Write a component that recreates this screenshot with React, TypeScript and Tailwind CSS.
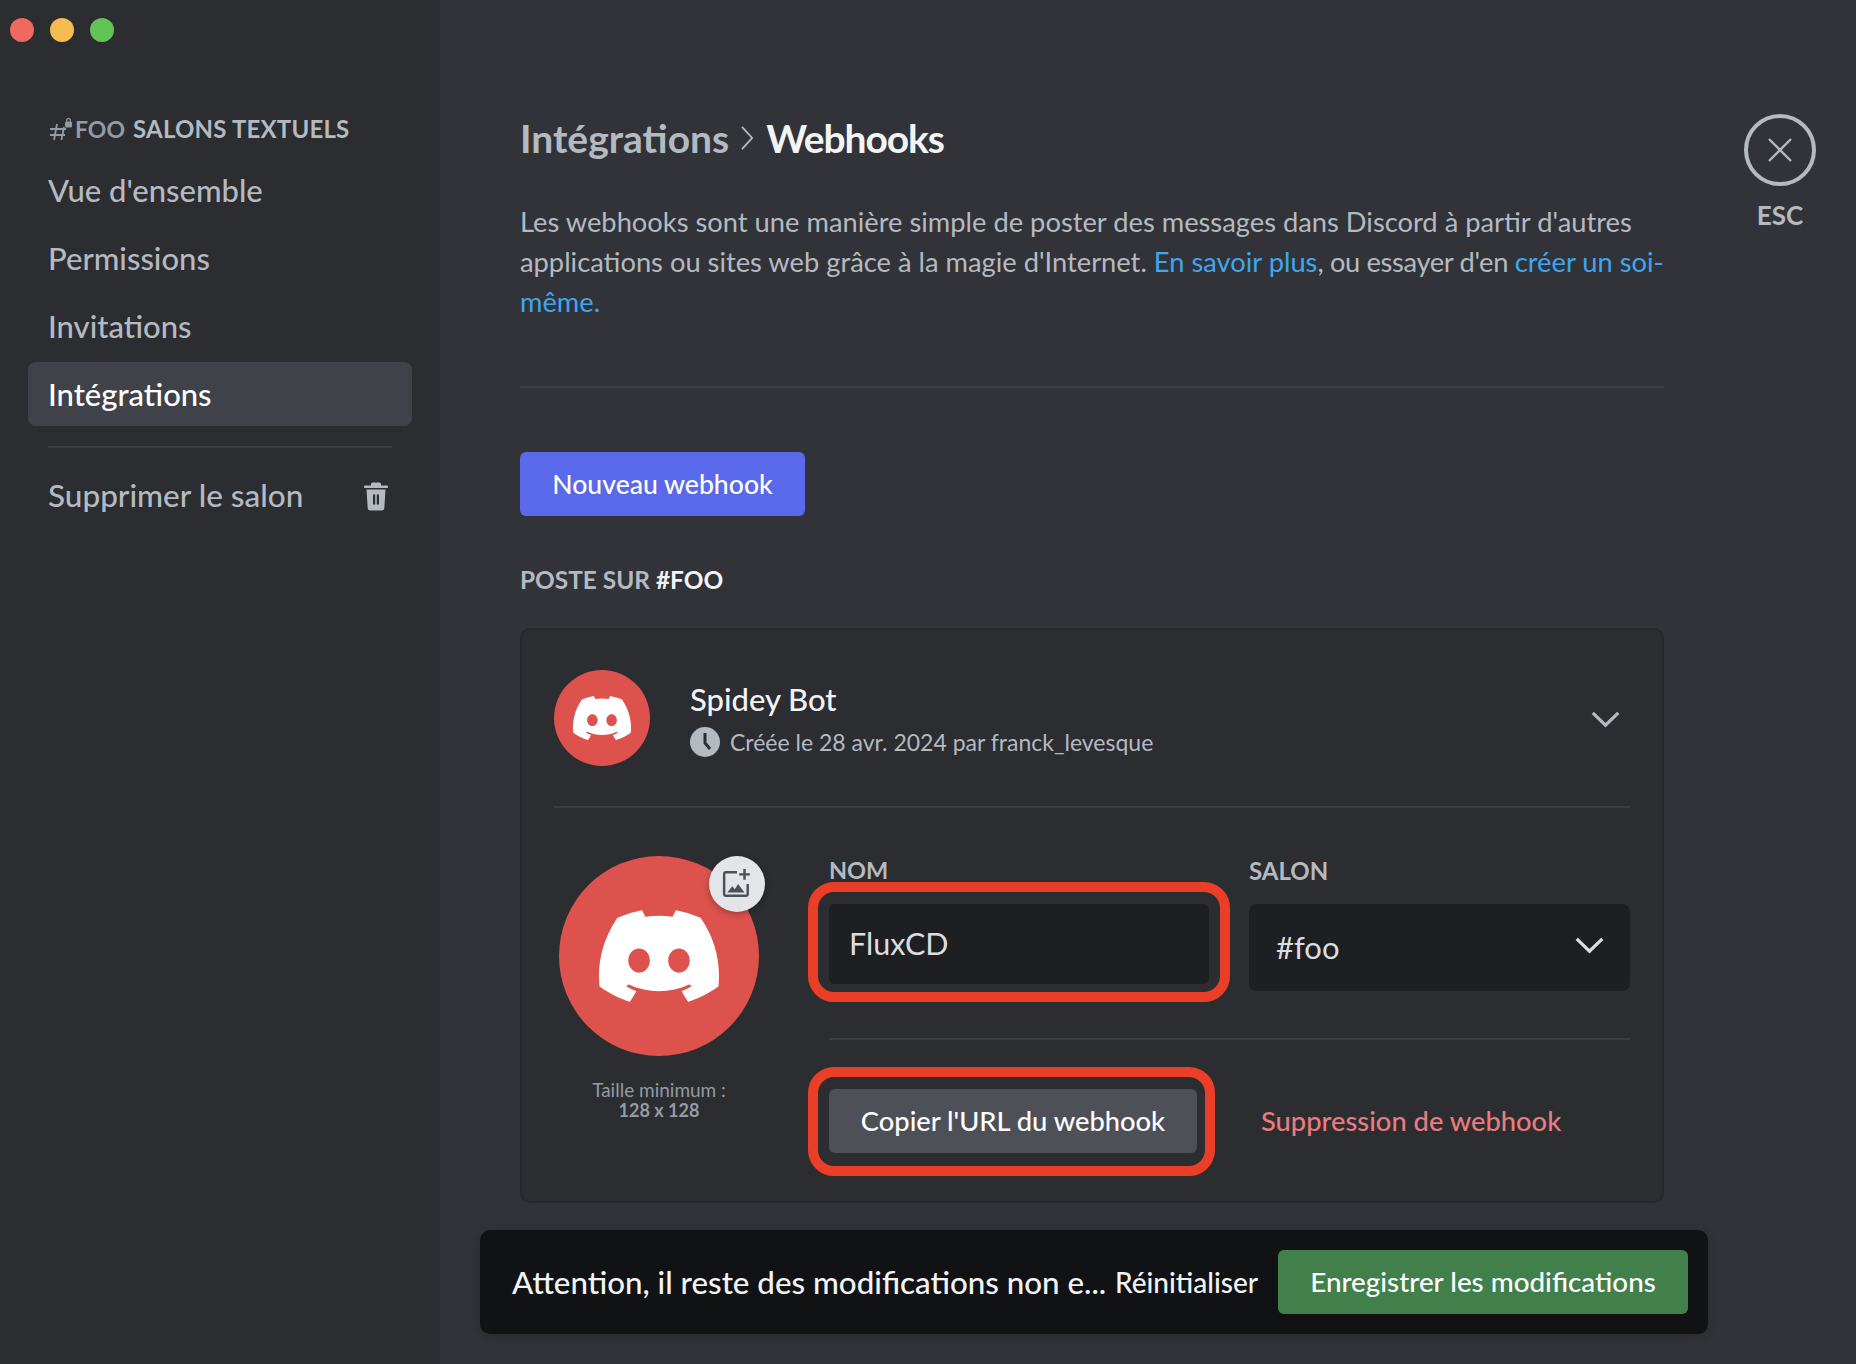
import { SiDiscord } from "react-icons/si";

function Chevron({ className }: { className: string }) {
  return (
    <svg viewBox="0 0 30 18" className={className} fill="none" stroke="currentColor" strokeWidth="3.4">
      <path d="M1.5 2 15 15 28.5 2" />
    </svg>
  );
}

function NavItem({ label, active }: { label: string; active?: boolean }) {
  return (
    <div
      className={
        active
          ? "flex h-[64px] w-[384px] items-center rounded-[8px] bg-[#404249] px-[20px] text-[31px] font-medium text-white"
          : "flex h-[64px] w-[384px] items-center rounded-[8px] px-[20px] text-[31px] font-medium text-[#b5bac1]"
      }
    >
      {label}
    </div>
  );
}

function Sidebar() {
  return (
    <aside className="h-full w-[440px] shrink-0 bg-[#2b2d31]">
      <div className="ml-[10px] flex gap-[16px] pt-[18px]">
        <div className="size-[24px] rounded-full bg-[#ee6a5f]" />
        <div className="size-[24px] rounded-full bg-[#f5bd4f]" />
        <div className="size-[24px] rounded-full bg-[#61c454]" />
      </div>
      <div className="ml-[49px] mt-[72px] flex h-[30px] items-center text-[24px] font-bold text-[#b5bac1]">
        <svg viewBox="0 0 24 24" className="mr-[2px] size-[24px] text-[#949ba4]" fill="none" stroke="currentColor" strokeWidth="1.8">
          <path d="M8 7 5 23M15 10l-2.6 13M1 12h16M1 18h15" />
          <rect x="16" y="4.5" width="7" height="6" rx="1.5" fill="currentColor" stroke="none" />
          <path d="M17.6 5V3.6a1.9 1.9 0 0 1 3.8 0V5" strokeWidth="1.2" />
        </svg>
        <span className="text-[23px] text-[#949ba4]">FOO</span>
        <span className="ml-[8px] tracking-[0.2px]">SALONS TEXTUELS</span>
      </div>
      <div className="ml-[28px] mt-[14px] flex flex-col gap-[4px]">
        <NavItem label="Vue d'ensemble" />
        <NavItem label="Permissions" />
        <NavItem label="Invitations" />
        <NavItem label="Intégrations" active />
      </div>
      <div className="ml-[48px] mt-[20px] h-[2px] w-[344px] bg-[#3b3d44]" />
      <div className="ml-[28px] mt-[16px] flex h-[64px] w-[384px] items-center justify-between pl-[20px] pr-[24px] text-[31.5px] font-medium text-[#b5bac1]">
        <span>Supprimer le salon</span>
        <svg viewBox="0 0 24 28" className="h-[29px] w-[24px]" fill="currentColor">
          <path d="M8.5 0h7a1.5 1.5 0 0 1 1.5 1.5V3h6a1 1 0 0 1 0 2.4H1A1 1 0 0 1 1 3h6V1.500A1.500 1.500 0 0 1 8.500 0Z" />
          <path fillRule="evenodd" d="M2.500 7h19l-1.200 18.500A2.700 2.700 0 0 1 17.600 28H6.400a2.700 2.700 0 0 1-2.700-2.500L2.500 7Zm6.500 5v10h2.200V12H9Zm3.800 0v10H15V12h-2.200Z" />
        </svg>
      </div>
    </aside>
  );
}

function WebhookCard() {
  return (
    <div className="mt-[34px] h-[575px] rounded-[10px] border-2 border-[#26282c] bg-[#2b2d31] px-[32px] pt-[40px]">
      <div className="flex h-[96px] items-center">
        <div className="flex size-[96px] items-center justify-center rounded-full bg-[#dd524c]">
          <SiDiscord className="size-[58px] text-white" />
        </div>
        <div className="ml-[40px] flex-1">
          <div className="text-[31px] font-medium leading-[40px] text-[#f2f3f5]">Spidey Bot</div>
          <div className="mt-[8px] flex h-[30px] items-center text-[23px] text-[#b5bac1]">
            <svg viewBox="0 0 30 30" className="mr-[10px] size-[30px]">
              <circle cx="15" cy="15" r="15" fill="#b5bac1" />
              <path d="M15 6v10l5 6" fill="none" stroke="#2b2d31" strokeWidth="3" />
            </svg>
            Créée le 28 avr. 2024 par franck_levesque
          </div>
        </div>
        <Chevron className="mr-[10px] mt-[2px] h-[17px] w-[29px] text-[#b5bac1]" />
      </div>

      <div className="mt-[40px] h-[2px] bg-[#3b3d44]" />

      <div className="flex pt-[48px]">
        <div className="w-[275px] shrink-0 pl-[5px]">
          <div className="relative size-[200px]">
            <div className="flex size-[200px] items-center justify-center rounded-full bg-[#dd524c]">
              <SiDiscord className="size-[120px] text-white" />
            </div>
            <div className="absolute right-[-6px] top-0 flex size-[56px] items-center justify-center rounded-full bg-[#e3e5e8] shadow-[0_2px_6px_rgba(0,0,0,0.3)]">
              <svg viewBox="0 0 28 28" className="size-[30px] text-[#4e5058]" fill="none" stroke="currentColor" strokeWidth="2.300">
                <path d="M14 3H3.500a1.500 1.500 0 0 0-1.500 1.500v19A1.500 1.500 0 0 0 3.500 25h19a1.500 1.500 0 0 0 1.500-1.500V14" />
                <path d="M21 0v10M16 5h10" />
                <path d="m5 22 4.500-6 2.500 3 3-5 6 8H5Z" fill="currentColor" stroke="none" />
              </svg>
            </div>
          </div>
          <div className="mt-[24px] w-[200px] text-center text-[19px] leading-[20px] text-[#949ba4]">
            <div>Taille minimum :</div>
            <div className="text-[18px] font-bold">128 x 128</div>
          </div>
        </div>

        <div className="mt-[3px] w-[801px]">
          <div className="flex gap-[40px]">
            <div className="w-[380px]">
              <div className="flex h-[24px] items-center text-[23.5px] font-bold text-[#b5bac1]">NOM</div>
              <div className="relative mt-[21px] flex h-[80px] items-center rounded-[6px] bg-[#1e1f22] pl-[20px] text-[30.5px] text-[#dbdee1]">
                FluxCD
                <div className="absolute -bottom-[18px] -left-[21px] -right-[21px] -top-[22px] rounded-[26px] border-[10px] border-[#ea3f26]" />
              </div>
            </div>
            <div className="w-[381px]">
              <div className="flex h-[24px] items-center text-[24px] font-bold text-[#b5bac1]">SALON</div>
              <div className="mt-[21px] flex h-[87px] items-center justify-between rounded-[8px] bg-[#1e1f22] pl-[27px] pr-[26px] text-[31px] text-[#dbdee1]">
                #foo
                <Chevron className="-mt-[5px] h-[17px] w-[29px] text-[#dbdee1]" />
              </div>
            </div>
          </div>

          <div className="mt-[47px] h-[2px] bg-[#3b3d44]" />

          <div className="mt-[49px] flex items-center">
            <div className="relative flex h-[64px] w-[368px] items-center justify-center rounded-[6px] bg-[#4e5058] text-[27.3px] font-medium text-white">
              Copier l'URL du webhook
              <div className="absolute -bottom-[23px] -left-[21px] -right-[18px] -top-[22px] rounded-[26px] border-[10px] border-[#ea3f26]" />
            </div>
            <span className="ml-[64px] text-[27.3px] font-medium text-[#ea7b7f]">Suppression de webhook</span>
          </div>
        </div>
      </div>
    </div>
  );
}

export default function App() {
  return (
    <div className="flex h-[1364px] w-[1856px] overflow-hidden bg-[#313338] font-['Lato','Noto_Sans',sans-serif]">
      <Sidebar />
      <main className="flex flex-1 pl-[80px]">
        <div className="w-[1144px] shrink-0">
          <div className="mt-[115px] flex h-[46px] items-center text-[39px] font-bold">
            <span className="text-[#b5bac1]">Intégrations</span>
            <svg viewBox="0 0 14 26" className="mx-[12px] h-[24px] w-[13px] text-[#b5bac1]" fill="none" stroke="currentColor" strokeWidth="2">
              <path d="m1 1 11 12L1 25" />
            </svg>
            <span className="tracking-[-1.1px] text-[#f2f3f5]">Webhooks</span>
          </div>
          <p className="mt-[41px] text-[27.3px] leading-[40px] text-[#b5bac1]">
            Les webhooks sont une manière simple de poster des messages dans Discord à partir d'autres applications ou sites web grâce à la magie d'Internet.{" "}
            <span className="text-[#3fa6ee]">En savoir plus</span>
            <span className="tracking-[-0.35px]">, ou essayer d'en </span>
            <span className="text-[#3fa6ee]">créer un soi-même.</span>
          </p>
          <div className="mt-[64px] h-[2px] bg-[#3f4147]" />
          <div className="mt-[64px] flex h-[64px] w-[285px] items-center justify-center rounded-[6px] bg-[#5a69e9] pt-[1px] text-[26.6px] font-medium text-white">
            Nouveau webhook
          </div>
          <div className="mt-[50px] flex h-[28px] items-center text-[24.4px] font-bold text-[#b5bac1]">
            POSTE SUR<span className="ml-[6px] text-[#f2f3f5]">#FOO</span>
          </div>
          <WebhookCard />
          <div className="-ml-[40px] mt-[27px] flex h-[104px] w-[1228px] items-center rounded-[10px] bg-[#111214] pl-[32px] pr-[20px] shadow-[0_2px_10px_rgba(0,0,0,0.2)]">
            <span className="flex-1 text-[31.3px] font-medium text-[#f2f3f5]">Attention, il reste des modifications non e...</span>
            <span className="mr-[20px] text-[28px] font-medium text-[#f2f3f5]">Réinitialiser</span>
            <div className="flex h-[64px] w-[410px] items-center justify-center rounded-[6px] bg-[#41804b] text-[27.8px] font-medium text-white">
              Enregistrer les modifications
            </div>
          </div>
        </div>
        <div className="ml-[80px] flex w-[72px] flex-col items-center pt-[114px]">
          <div className="flex size-[72px] items-center justify-center rounded-full border-[4px] border-[#b5bac1]">
            <svg viewBox="0 0 24 24" className="size-[24px] text-[#b5bac1]" fill="none" stroke="currentColor" strokeWidth="2.400">
              <path d="M1 1l22 22M23 1 1 23" />
            </svg>
          </div>
          <div className="mt-[10px] text-[26px] font-bold text-[#b5bac1]">ESC</div>
        </div>
      </main>
    </div>
  );
}
